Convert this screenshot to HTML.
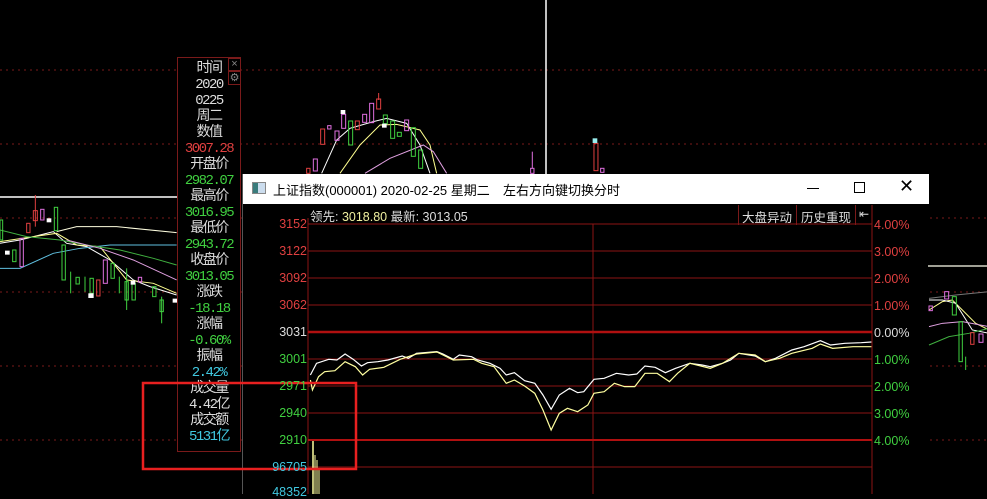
<!DOCTYPE html>
<html><head><meta charset="utf-8"><style>
*{margin:0;padding:0;box-sizing:border-box}
body{width:987px;height:494px;background:#000;overflow:hidden;position:relative;font-family:"Liberation Sans","Noto Sans CJK SC",sans-serif}
.a{position:absolute}
.panel{left:177px;top:57px;width:64px;height:395px;border:1px solid #7a1a1a;background:#000}
.panel div{position:absolute;left:0;width:62px;text-align:center;font-size:14px;line-height:16px;white-space:nowrap;font-family:"Liberation Mono","Noto Sans CJK SC",monospace;letter-spacing:-1.5px}
.w{color:#ddd}.r{color:#e04040}.g{color:#40d040}.c{color:#40c8e0}
.ylab{position:absolute;width:62px;text-align:right;font-size:12.5px;left:0}
.rlab{position:absolute;left:874px;font-size:12.5px}
</style></head><body>
<svg class="a" style="left:0;top:0" width="987" height="494">
<g stroke="#7a1a1a" stroke-dasharray="2,4" stroke-width="1">
<line x1="0" y1="70" x2="987" y2="70"/><line x1="0" y1="144" x2="987" y2="144"/>
<line x1="0" y1="218" x2="987" y2="218"/><line x1="0" y1="292" x2="987" y2="292"/>
<line x1="0" y1="366" x2="987" y2="366"/><line x1="0" y1="440" x2="987" y2="440"/>
</g>
<line x1="546" y1="0" x2="546" y2="175" stroke="#fff" stroke-width="1.5"/>
<line x1="0" y1="197" x2="177" y2="197" stroke="#fff" stroke-width="1.5"/>
<line x1="928" y1="266" x2="987" y2="266" stroke="#ffe" stroke-width="1.2"/>
<g transform="translate(0,80) scale(0.3333)" fill="none" stroke-width="3">
<polyline points="0,490 60,480 120,465 160,455 200,490 260,500 330,540 400,600 450,620 530,645" stroke="#fff"/>
<polyline points="0,485 100,470 170,460 230,495 300,500 380,600 460,610 530,640" stroke="#ffff90"/>
<polyline points="0,565 60,565 160,520 240,505 330,495 530,495" stroke="#60c0e0"/>
<polyline points="0,450 80,470 180,480 260,495 360,510 460,535 530,555" stroke="#40b040"/>
<polyline points="170,455 230,440 350,440 530,458" stroke="#ffffe0"/>
<polyline points="200,480 300,505 400,540 530,600" stroke="#e0a0e0"/>
<g stroke="#e04040"><rect x="80" y="430" width="10" height="28"/><rect x="100" y="392" width="12" height="30"/><rect x="290" y="600" width="10" height="48"/><line x1="106" y1="345" x2="106" y2="440"/></g>
<g stroke="#e070e0"><rect x="122" y="388" width="10" height="32"/><rect x="60" y="475" width="10" height="85"/><rect x="310" y="540" width="12" height="70"/><rect x="415" y="592" width="10" height="14"/></g>
<g stroke="#40d040"><rect x="163" y="382" width="10" height="70"/><rect x="186" y="495" width="10" height="105"/><rect x="0" y="420" width="8" height="60"/><rect x="38" y="510" width="10" height="35"/><rect x="228" y="592" width="10" height="20"/><rect x="270" y="595" width="10" height="45"/><rect x="333" y="550" width="10" height="45"/><rect x="375" y="605" width="10" height="55"/><rect x="396" y="610" width="10" height="50"/><rect x="458" y="620" width="10" height="30"/><rect x="480" y="660" width="10" height="35"/><line x1="212" y1="575" x2="212" y2="640"/><line x1="255" y1="590" x2="255" y2="635"/><line x1="358" y1="590" x2="358" y2="640"/><line x1="380" y1="565" x2="380" y2="690"/><line x1="485" y1="650" x2="485" y2="730"/></g>
<g fill="#fff" stroke="none"><rect x="140" y="415" width="14" height="12"/><rect x="265" y="640" width="16" height="14"/><rect x="15" y="512" width="14" height="12"/><rect x="392" y="602" width="14" height="12"/><rect x="518" y="656" width="14" height="12"/></g>
</g>
<g transform="translate(240,85) scale(0.3333)" fill="none" stroke-width="3">
<polyline points="245,265 290,165 330,130 400,110 440,100 500,115 540,180 570,265" stroke="#fff"/>
<polyline points="300,265 360,180 420,120 470,118 540,135 570,180 590,265" stroke="#ffff90"/>
<polyline points="375,265 450,220 550,180 580,200 620,265" stroke="#e0a0e0"/>
<g stroke="#e04040"><rect x="242" y="132" width="12" height="46"/><rect x="346" y="108" width="12" height="26"/><rect x="410" y="42" width="12" height="30"/><line x1="416" y1="24" x2="416" y2="45"/><rect x="1062" y="175" width="12" height="82"/><rect x="200" y="250" width="10" height="15"/></g>
<g stroke="#e070e0"><rect x="263" y="122" width="10" height="10"/><rect x="285" y="138" width="12" height="28"/><rect x="305" y="88" width="12" height="42"/><rect x="368" y="88" width="12" height="24"/><rect x="389" y="55" width="12" height="58"/><rect x="494" y="105" width="12" height="32"/><rect x="220" y="222" width="12" height="36"/><rect x="1082" y="250" width="10" height="12"/><rect x="872" y="250" width="10" height="15"/><line x1="877" y1="200" x2="877" y2="250"/></g>
<g stroke="#40d040"><rect x="326" y="108" width="12" height="72"/><rect x="430" y="90" width="12" height="26"/><rect x="452" y="108" width="12" height="52"/><rect x="472" y="142" width="12" height="12"/><rect x="514" y="128" width="12" height="86"/><rect x="536" y="195" width="12" height="55"/></g>
<g fill="#fff" stroke="none"><rect x="302" y="75" width="14" height="12"/><rect x="426" y="116" width="14" height="12"/></g>
<rect x="1058" y="160" width="14" height="14" fill="#9ee" stroke="none"/>
</g>
<g transform="translate(929,200) scale(0.3333)" fill="none" stroke-width="3">
<polyline points="0,330 40,305 70,300 100,330 140,370 180,390" stroke="#ffff90"/>
<polyline points="0,300 40,300 80,310 130,390 180,400" stroke="#fff"/>
<polyline points="0,380 40,370 100,365 180,380" stroke="#e0a0e0"/>
<polyline points="0,435 60,410 120,400 180,385" stroke="#40b040"/>
<polyline points="0,295 80,285 180,275" stroke="#777"/>
<g stroke="#40d040"><rect x="70" y="290" width="12" height="55"/><rect x="90" y="365" width="10" height="120"/><line x1="110" y1="470" x2="110" y2="510"/></g>
<g stroke="#e070e0"><rect x="47" y="275" width="12" height="22"/><rect x="0" y="318" width="10" height="14"/><rect x="150" y="402" width="12" height="25"/></g>
<rect x="125" y="398" width="10" height="35" stroke="#e04040"/>
</g>
</svg>

<div class="a panel">
<div class="w" style="top:3px">时间</div>
<div class="w" style="top:19px">2020</div>
<div class="w" style="top:35px">0225</div>
<div class="w" style="top:51px">周二</div>
<div class="w" style="top:67px">数值</div>
<div class="r" style="top:83px">3007.28</div>
<div class="w" style="top:99px">开盘价</div>
<div class="g" style="top:115px">2982.07</div>
<div class="w" style="top:131px">最高价</div>
<div class="g" style="top:147px">3016.95</div>
<div class="w" style="top:163px">最低价</div>
<div class="g" style="top:179px">2943.72</div>
<div class="w" style="top:195px">收盘价</div>
<div class="g" style="top:211px">3013.05</div>
<div class="w" style="top:227px">涨跌</div>
<div class="g" style="top:243px">-18.18</div>
<div class="w" style="top:259px">涨幅</div>
<div class="g" style="top:275px">-0.60%</div>
<div class="w" style="top:291px">振幅</div>
<div class="c" style="top:307px">2.42%</div>
<div class="w" style="top:323px">成交量</div>
<div class="w" style="top:339px">4.42亿</div>
<div class="w" style="top:355px">成交额</div>
<div class="c" style="top:371px">5131亿</div>
<span class="a" style="left:50px;top:0;width:13px;height:13px;border:1px solid #7a1a1a;color:#888;font-size:11px;line-height:11px;text-align:center">×</span>
<span class="a" style="left:50px;top:13px;width:13px;height:14px;border:1px solid #7a1a1a;color:#888;font-size:11px;line-height:12px;text-align:center">⚙</span>
</div>

<div class="a" style="left:242px;top:174px;width:686px;height:320px;background:#000;border-left:1px solid #555">
<div class="a" style="left:0;top:0;width:686px;height:30px;background:#fff;font-size:13px;color:#000">
<span class="a" style="left:9px;top:8px;width:14px;height:12px;border:1px solid #888;background:linear-gradient(90deg,#3a7c7c 40%,#cde 40%)"></span>
<span class="a" style="left:30px;top:6px">上证指数(000001) 2020-02-25 星期二</span>
<span class="a" style="left:260px;top:6px">左右方向键切换分时</span>
<span class="a" style="left:564px;top:14px;width:12px;height:1px;background:#000"></span>
<span class="a" style="left:611px;top:8px;width:11px;height:11px;border:1px solid #000"></span>
<span class="a" style="left:656px;top:2px;font-size:18px;font-weight:200">✕</span>
</div>
<span class="a" style="left:67px;top:32px;font-size:12.5px;color:#ddd">领先: <span style="color:#f0f0a0">3018.80</span> 最新: 3013.05</span>
<span class="a" style="left:495px;top:31px;width:58px;height:20px;border-left:1px solid #7a1a1a;color:#ddd;font-size:12.5px;padding:2px 0 0 3px">大盘异动</span>
<span class="a" style="left:553px;top:31px;width:58px;height:20px;border-left:1px solid #7a1a1a;color:#ddd;font-size:12.5px;padding:2px 0 0 4px">历史重现</span>
<span class="a" style="left:612px;top:31px;width:18px;height:20px;border-left:1px solid #7a1a1a;color:#ddd;font-size:12px;padding:2px 0 0 3px">⇤</span>
</div>
<svg class="a" style="left:0;top:0" width="987" height="494">
<g stroke="#8b1515" stroke-width="1">
<line x1="308" y1="224" x2="872" y2="224"/><line x1="308" y1="251" x2="872" y2="251"/>
<line x1="308" y1="278" x2="872" y2="278"/><line x1="308" y1="305" x2="872" y2="305"/>
<line x1="308" y1="359" x2="872" y2="359"/><line x1="308" y1="386" x2="872" y2="386"/>
<line x1="308" y1="413" x2="872" y2="413"/><line x1="308" y1="467" x2="872" y2="467"/>
<line x1="308" y1="218" x2="308" y2="494"/><line x1="872" y1="205" x2="872" y2="494"/>
<line x1="593" y1="224" x2="593" y2="494"/>
</g>
<line x1="308" y1="332" x2="872" y2="332" stroke="#b01010" stroke-width="2.5"/>
<line x1="308" y1="440" x2="872" y2="440" stroke="#b01010" stroke-width="2"/>
<g transform="translate(290,330) scale(0.408,0.3333)" fill="none">
<polyline vector-effect="non-scaling-stroke" stroke="#fff" stroke-width="1.2" points="50,135 65,100 95,88 115,90 135,72 155,88 175,108 190,98 215,95 240,90 275,78 290,85 310,70 360,65 375,72 400,88 415,75 445,80 460,90 490,100 515,115 530,135 550,128 575,152 600,160 620,195 640,238 660,195 685,175 705,188 720,185 745,148 770,145 800,130 830,135 850,132 870,108 895,112 920,128 945,115 980,100 1010,105 1030,110 1060,100 1080,90 1100,70 1140,78 1165,95 1190,85 1230,60 1260,50 1300,32 1325,45 1360,40 1400,38 1425,36"/>
<polyline vector-effect="non-scaling-stroke" stroke="#ffffa0" stroke-width="1.2" points="50,150 55,180 70,140 85,125 110,122 135,95 160,110 178,135 195,118 230,112 270,88 310,72 360,66 400,90 450,88 470,100 500,110 530,160 550,150 575,168 600,190 620,240 640,300 660,250 680,235 705,245 730,225 745,190 770,185 795,160 820,170 845,170 870,130 900,130 930,155 950,130 980,100 1030,115 1060,100 1100,70 1140,75 1165,95 1200,85 1230,70 1280,55 1300,42 1330,55 1380,50 1425,50"/>
</g>
<line x1="313" y1="441" x2="313" y2="494" stroke="#ffffa0" stroke-width="1.5"/>
<g stroke="#ffffa0" stroke-width="1"><line x1="315" y1="455" x2="315" y2="494"/><line x1="317" y1="460" x2="317" y2="494"/><line x1="319" y1="470" x2="319" y2="494"/></g>
<rect x="143" y="383" width="213" height="86" fill="none" stroke="#e82020" stroke-width="2.5"/>
</svg>
<div class="a" style="left:245px;top:0;width:62px;height:494px">
<div class="ylab r" style="top:217px">3152</div>
<div class="ylab r" style="top:244px">3122</div>
<div class="ylab r" style="top:271px">3092</div>
<div class="ylab r" style="top:298px">3062</div>
<div class="ylab w" style="top:325px">3031</div>
<div class="ylab g" style="top:352px">3001</div>
<div class="ylab g" style="top:379px">2971</div>
<div class="ylab g" style="top:406px">2940</div>
<div class="ylab g" style="top:433px">2910</div>
<div class="ylab c" style="top:460px">96705</div>
<div class="ylab c" style="top:485px">48352</div>
</div>
<div class="rlab r" style="top:218px">4.00%</div>
<div class="rlab r" style="top:245px">3.00%</div>
<div class="rlab r" style="top:272px">2.00%</div>
<div class="rlab r" style="top:299px">1.00%</div>
<div class="rlab w" style="top:326px">0.00%</div>
<div class="rlab g" style="top:353px">1.00%</div>
<div class="rlab g" style="top:380px">2.00%</div>
<div class="rlab g" style="top:407px">3.00%</div>
<div class="rlab g" style="top:434px">4.00%</div>
</body></html>
